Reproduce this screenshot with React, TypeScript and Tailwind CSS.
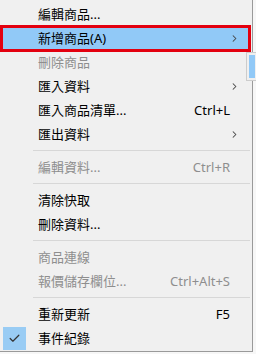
import { Check, ChevronRight } from "lucide-react";

type Item =
  | { sep: true }
  | {
      sep?: false;
      label: string;
      shortcut?: string;
      sub?: boolean;
      disabled?: boolean;
      active?: boolean;
      checked?: boolean;
    };

const items: Item[] = [
  { label: "編輯商品..." },
  { label: "新增商品(A)", sub: true, active: true },
  { label: "刪除商品", disabled: true },
  { label: "匯入資料", sub: true },
  { label: "匯入商品清單...", shortcut: "Ctrl+L" },
  { label: "匯出資料", sub: true },
  { sep: true },
  { label: "編輯資料...", shortcut: "Ctrl+R", disabled: true },
  { sep: true },
  { label: "清除快取" },
  { label: "刪除資料..." },
  { sep: true },
  { label: "商品連線", disabled: true },
  { label: "報價儲存欄位...", shortcut: "Ctrl+Alt+S", disabled: true },
  { sep: true },
  { label: "重新更新", shortcut: "F5" },
  { label: "事件紀錄", checked: true },
];

export default function App() {
  return (
    <div
      className="relative h-[354px] w-[256px] overflow-hidden bg-[#f7f7f7] text-[13px]"
      style={{ fontFamily: '"Noto Sans", "Noto Sans CJK TC", sans-serif' }}
    >
      <div className="w-[253px] border-r border-b border-[#9a9a9a] bg-[#f0f0f0] pt-[2px] pb-[1px]">
        {items.map((it, i) =>
          it.sep ? (
            <div key={i} className="py-[4px] pl-[33px] pr-[2px]">
              <div className="h-px bg-[#d7d7d7]" />
            </div>
          ) : (
            <div
              key={i}
              className={
                "flex items-center " +
                (it.active
                  ? "relative z-10 -mt-px -mb-[2px] mr-[1px] h-[27px] border-[3px] border-[#e3000f] bg-[#91c9f7]"
                  : "h-[24px]")
              }
            >
              <div className={"flex w-[38px] items-center " + (it.active ? "pl-[1px]" : "pl-[3px]")}>
                {it.checked && (
                  <div className="flex h-[23px] w-[23px] items-center justify-center bg-[#99ccf4]">
                    <Check size={13} strokeWidth={2.2} className="text-[#333]" />
                  </div>
                )}
              </div>
              <span
                className={
                  "flex-1 leading-none " +
                  (it.disabled ? "text-[#8e8e8e]" : "text-black") +
                  (it.active ? " -ml-[3px]" : "")
                }
              >
                {it.label}
              </span>
              {it.shortcut && (
                <span className={"mr-[22px] leading-none " + (it.disabled ? "text-[#8e8e8e]" : "text-black")}>
                  {it.shortcut}
                </span>
              )}
              {it.sub && (
                <ChevronRight
                  size={11}
                  strokeWidth={2.2}
                  className={"text-[#444] " + (it.active ? "mr-[8px]" : "mr-[12px]")}
                />
              )}
            </div>
          )
        )}
      </div>
      <div className="absolute left-[246px] top-[52px] h-[29px] w-[12px] border border-[#cccccc] bg-[#f0f0f0] p-[2px]">
        <div className="h-full bg-[#91c9f7]" />
      </div>
    </div>
  );
}
